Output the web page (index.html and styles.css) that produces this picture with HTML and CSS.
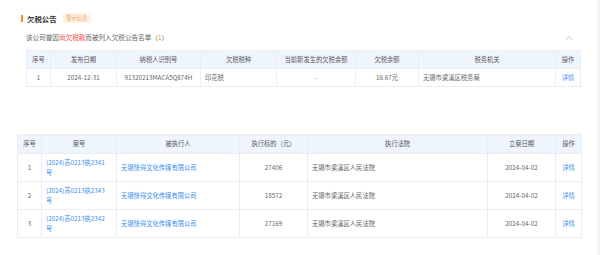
FILE: index.html
```html
<!DOCTYPE html>
<html lang="zh-CN">
<head>
    <meta charset="UTF-8">
    <title>欠税公告</title>
    <link rel="stylesheet" href="styles.css">
</head>
<body>
    <div class="page">
        <div class="tax-section">
            <div class="section-title">
                <span class="bar"></span>
                <h2>欠税公告</h2>
                <span class="badge">警示信息</span>
            </div>
            <div class="summary">
                <p>该公司曾因<span class="red">尚欠税款</span>而被列入欠税公告名单（<span class="count">1</span>）</p>
                <svg class="caret" width="8" height="5" viewBox="0 0 8 5"><path d="M1 4.5 L4 1.5 L7 4.5" fill="none" stroke="#b5b5b5" stroke-width="0.9"/></svg>
            </div>
            <table class="data-table tax-table">
                <colgroup>
                    <col class="c-no"><col class="c-date"><col class="c-id"><col class="c-kind">
                    <col class="c-new"><col class="c-amount"><col class="c-office"><col class="c-op">
                </colgroup>
                <thead>
                    <tr>
                        <th>序号</th><th>发布日期</th><th>纳税人识别号</th><th>欠税税种</th>
                        <th>当前新发生的欠税余额</th><th>欠税余额</th><th>税务机关</th><th>操作</th>
                    </tr>
                </thead>
                <tbody>
                    <tr>
                        <td>1</td>
                        <td>2024-12-31</td>
                        <td>91320213MACA5Q874H</td>
                        <td class="left">印花税</td>
                        <td>-</td>
                        <td>16.67元</td>
                        <td class="left">无锡市梁溪区税务局</td>
                        <td><a href="#">详情</a></td>
                    </tr>
                </tbody>
            </table>
        </div>

        <div class="case-section">
            <table class="data-table case-table">
                <colgroup>
                    <col class="k-no"><col class="k-case"><col class="k-party"><col class="k-money">
                    <col class="k-court"><col class="k-date"><col class="k-op">
                </colgroup>
                <thead>
                    <tr>
                        <th>序号</th><th>案号</th><th>被执行人</th><th>执行标的（元）</th>
                        <th>执行法院</th><th>立案日期</th><th>操作</th>
                    </tr>
                </thead>
                <tbody>
                    <tr>
                        <td>1</td>
                        <td class="left"><a href="#">(2024)苏0213执2341号</a></td>
                        <td class="left"><a href="#">无锡快得文化传媒有限公司</a></td>
                        <td>27406</td>
                        <td class="left">无锡市梁溪区人民法院</td>
                        <td>2024-04-02</td>
                        <td><a href="#">详情</a></td>
                    </tr>
                    <tr>
                        <td>2</td>
                        <td class="left"><a href="#">(2024)苏0213执2343号</a></td>
                        <td class="left"><a href="#">无锡快得文化传媒有限公司</a></td>
                        <td>18572</td>
                        <td class="left">无锡市梁溪区人民法院</td>
                        <td>2024-04-02</td>
                        <td><a href="#">详情</a></td>
                    </tr>
                    <tr>
                        <td>3</td>
                        <td class="left"><a href="#">(2024)苏0213执2342号</a></td>
                        <td class="left"><a href="#">无锡快得文化传媒有限公司</a></td>
                        <td>17169</td>
                        <td class="left">无锡市梁溪区人民法院</td>
                        <td>2024-04-02</td>
                        <td><a href="#">详情</a></td>
                    </tr>
                </tbody>
            </table>
        </div>
    </div>
</body>
</html>
```

FILE: styles.css
```css
* {
    margin: 0;
    padding: 0;
    box-sizing: border-box;
    font-family: "Noto Sans CJK SC", "Noto Sans", sans-serif;
}

body {
    background-color: #f4f5f7;
    width: 600px;
    height: 255px;
    overflow: hidden;
}

.page {
    width: 597px;
    height: 255px;
    background: white;
    padding-top: 12px;
}

.tax-section {
    padding: 0 20px 0 21px;
}

.section-title {
    display: flex;
    align-items: center;
    height: 12px;
}

.bar {
    width: 2px;
    height: 7px;
    background-color: #f0892a;
    margin-right: 4px;
}

.section-title h2 {
    font-size: 7.4px;
    font-weight: bold;
    color: #333;
    margin-right: 6px;
}

.badge {
    background-color: #fdf1e4;
    color: #f3a04a;
    font-size: 5.2px;
    padding: 2px 4px;
    line-height: 6px;
}

.summary {
    display: flex;
    justify-content: space-between;
    align-items: center;
    padding: 7px 4px 7px 5px;
    height: 26px;
}

.summary p {
    font-size: 6.6px;
    color: #666;
}

.red {
    color: #f04848;
}

.count {
    color: #f0892a;
}

.data-table {
    border-collapse: collapse;
    table-layout: fixed;
    font-size: 6.3px;
    color: #666;
}

.data-table th,
.data-table td {
    border: 1px solid #e9eef4;
    text-align: center;
    font-weight: normal;
    line-height: 10px;
}

.data-table th {
    background-color: #eef5fd;
    color: #555;
}

.data-table td.left {
    text-align: left;
    padding-left: 4px;
}

.data-table a {
    color: #3c8def;
    text-decoration: none;
}

.tax-table {
    width: 554px;
    margin-left: 5px;
}

.tax-table th,
.tax-table td {
    height: 18px;
}

.c-no { width: 24px; }
.c-date { width: 66px; }
.c-id { width: 84px; }
.c-kind { width: 76px; }
.c-new { width: 79px; }
.c-amount { width: 63px; }
.c-office { width: 137px; }
.c-op { width: 25px; }

.case-section {
    padding: 47px 0 0 17px;
}

.case-table {
    width: 564px;
}

.case-table th {
    height: 19px;
}

.case-table td {
    height: 28px;
}

.case-table td.left {
    padding-right: 10px;
}

.k-no { width: 24px; }
.k-case { width: 75px; }
.k-party { width: 123px; }
.k-money { width: 68px; }
.k-court { width: 180px; }
.k-date { width: 68px; }
.k-op { width: 26px; }
```
